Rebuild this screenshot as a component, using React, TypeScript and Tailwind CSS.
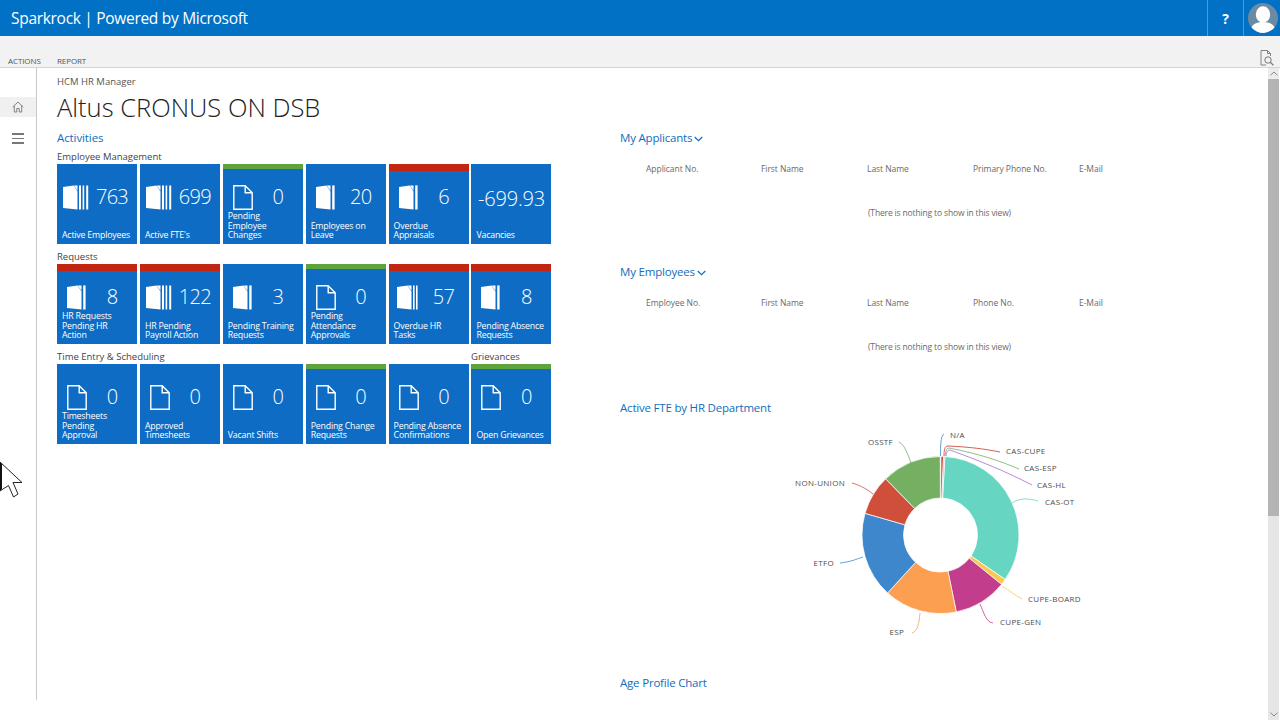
import React from "react";

type Kind = "many" | "two" | "some" | "one" | "none";
type Tile = { n: string; label: string[]; icon: Kind; bar?: "red" | "green" };

function DocIcon({ kind }: { kind: Kind }) {
  if (kind === "one") {
    return (
      <svg width="20" height="25" viewBox="0 0 20 25" className="block ml-[10px]">
        <path d="M.8 .8H12.2L19.2 7.8V24.2H.8Z M12.2 .8V7.8H19.2" fill="none" stroke="#fff" strokeWidth="1.4" />
      </svg>
    );
  }
  const page = "M0 2L10.5 .4L14.5 6.5V24.5L0 23Z M10.8 .4H14.5V5.8Z";
  if (kind === "some") {
    return (
      <svg width="19" height="25" viewBox="0 0 19 25" className="block ml-[10px]">
        <path d={page} fill="#fff" />
        <path d="M16.2 .4H18.6V24.5H16.2Z" fill="#fff" />
      </svg>
    );
  }
  if (kind === "two") {
    return (
      <svg width="21" height="25" viewBox="0 0 21 25" className="block ml-[8px]">
        <path d={page} fill="#fff" />
        <path d="M16 .4H17.6V24.5H16Z M19 .4H20.6V24.5H19Z" fill="#fff" />
      </svg>
    );
  }
  return (
    <svg width="26" height="25" viewBox="0 0 26 25" className="block ml-[6px]">
      <path d={page} fill="#fff" />
      <path d="M16 .4H18V24.5H16Z M19.6 .4H21.2V24.5H19.6Z M23.2 .4H25.2V24.5H23.2Z" fill="#fff" />
    </svg>
  );
}

function TileCard({ t }: { t: Tile }) {
  return (
    <div className="relative h-[80px] w-[80px] bg-[#0f6cc4] text-white overflow-hidden">
      {t.bar === "red" && <div className="h-[7px] bg-[#c22613]" />}
      {t.bar === "green" && <div className="h-[4.5px] bg-[#5ea33c]" />}
      <div className="absolute left-0 right-0 top-[20px] h-[26px]">
        {t.icon === "none" ? (
          <div className="w-full text-center text-[20px] tracking-[-0.2px] leading-[26px] font-light pt-[2px]">{t.n}</div>
        ) : (
          <div className="grid grid-cols-[32px_46px] items-center h-full">
            <DocIcon kind={t.icon} />
            <div className="text-center text-[20px] tracking-[-0.7px] leading-[26px] font-light">{t.n}</div>
          </div>
        )}
      </div>
      <div className="absolute left-[5px] right-0 bottom-[3px] text-[8.8px] leading-[9.6px] tracking-[-0.2px] whitespace-nowrap">
        {t.label.map((l) => (
          <div key={l}>{l}</div>
        ))}
      </div>
    </div>
  );
}

const r1: Tile[] = [
  { n: "763", label: ["Active Employees"], icon: "many" },
  { n: "699", label: ["Active FTE's"], icon: "many" },
  { n: "0", label: ["Pending", "Employee", "Changes"], icon: "one", bar: "green" },
  { n: "20", label: ["Employees on", "Leave"], icon: "some" },
  { n: "6", label: ["Overdue", "Appraisals"], icon: "some", bar: "red" },
  { n: "-699.93", label: ["Vacancies"], icon: "none" },
];
const r2: Tile[] = [
  { n: "8", label: ["HR Requests", "Pending HR", "Action"], icon: "some", bar: "red" },
  { n: "122", label: ["HR Pending", "Payroll Action"], icon: "many", bar: "red" },
  { n: "3", label: ["Pending Training", "Requests"], icon: "some" },
  { n: "0", label: ["Pending", "Attendance", "Approvals"], icon: "one", bar: "green" },
  { n: "57", label: ["Overdue HR", "Tasks"], icon: "two", bar: "red" },
  { n: "8", label: ["Pending Absence", "Requests"], icon: "some", bar: "red" },
];
const r3: Tile[] = [
  { n: "0", label: ["Timesheets", "Pending", "Approval"], icon: "one" },
  { n: "0", label: ["Approved", "Timesheets"], icon: "one" },
  { n: "0", label: ["Vacant Shifts"], icon: "one" },
  { n: "0", label: ["Pending Change", "Requests"], icon: "one", bar: "green" },
  { n: "0", label: ["Pending Absence", "Confirmations"], icon: "one" },
  { n: "0", label: ["Open Grievances"], icon: "one", bar: "green" },
];

function Row({ tiles }: { tiles: Tile[] }) {
  return (
    <div className="grid grid-cols-[80px_80px_80px_80px_80px_80px] gap-x-[2.9px] w-[495px]">
      {tiles.map((t, i) => (
        <TileCard key={i} t={t} />
      ))}
    </div>
  );
}

function Chevron() {
  return (
    <svg width="9" height="6" viewBox="0 0 9 6" className="inline-block ml-[2px] mt-[2px]">
      <path d="M0.7 1L4.5 4.6L8.3 1" fill="none" stroke="#106ebe" strokeWidth="1.2" />
    </svg>
  );
}

function ListPart({ title, cols }: { title: string; cols: string[] }) {
  const xs = ["w-[141px] pl-[26px]", "w-[106px]", "w-[106px]", "w-[106px]", "w-[60px]"];
  return (
    <div className="h-[134px]">
      <div className="h-[20px] text-[11.5px] tracking-[-0.2px] leading-[20px] text-[#106ebe] flex items-center">
        {title}
        <Chevron />
      </div>
      <div className="flex mt-[14px] h-[14px] text-[8.5px] tracking-[-0.05px] leading-[14px] text-[#6a6a6a]">
        {cols.map((c, i) => (
          <div key={c} className={xs[i]}>
            {c}
          </div>
        ))}
      </div>
      <div className="mt-[30px] pl-[248px] text-[8.5px] tracking-[-0.15px] leading-[14px] text-[#6a6a6a]">(There is nothing to show in this view)</div>
    </div>
  );
}

const cx = 160.5;
const cy = 114;
const R = 78.5;
const r = 37;
function pt(rad: number, deg: number) {
  const a = (deg * Math.PI) / 180;
  return `${(cx + rad * Math.sin(a)).toFixed(2)} ${(cy - rad * Math.cos(a)).toFixed(2)}`;
}
function seg(a: number, b: number) {
  const large = b - a > 180 ? 1 : 0;
  return `M${pt(R, a)}A${R} ${R} 0 ${large} 1 ${pt(R, b)}L${pt(r, b)}A${r} ${r} 0 ${large} 0 ${pt(r, a)}Z`;
}

const segs: [number, number, string][] = [
  [3.2, 124.5, "#66d6c2"],
  [124.5, 129, "#fbc74e"],
  [129, 168.4, "#c23d8b"],
  [168.4, 222.4, "#fd9f50"],
  [222.4, 286, "#3f87cc"],
  [286, 315.7, "#cf4f3a"],
  [315.7, 359.8, "#75af61"],
  [0.4, 2.2, "#c9372c"],
  [2.2, 3.2, "#b9b9b9"],
];

const leaders: [string, string][] = [
  ["M160.5 35C160.5 25 160.5 15 164 13", "#3f87cc"],
  ["M164 35C164 28 165 25 168 25C190 26 205 28 220 31", "#c9372c"],
  ["M165 35C166 30 166 27 169 27C200 33 220 40 239 48", "#75af61"],
  ["M166 35C167 31 167 29 170 29C200 40 225 50 252 64", "#a56cd6"],
  ["M232 82C240 77 248 77 258 80", "#66d6c2"],
  ["M222 165C230 170 236 175 242 178", "#fbc74e"],
  ["M200 183C204 192 206 201 213 202", "#c23d8b"],
  ["M140 192C139 202 138 210 132 212", "#fd9f50"],
  ["M83 136C77 138 70 141 60 142", "#3f87cc"],
  ["M93 73C88 69 82 65 72 62", "#cf4f3a"],
  ["M131 42C128 34 125 24 119 21", "#75af61"],
];

const labels: [string, number, number, "start" | "end"][] = [
  ["N/A", 170, 17, "start"],
  ["CAS-CUPE", 226, 33, "start"],
  ["CAS-ESP", 244, 50, "start"],
  ["CAS-HL", 257, 67, "start"],
  ["CAS-OT", 265, 84, "start"],
  ["CUPE-BOARD", 248, 181, "start"],
  ["CUPE-GEN", 220, 204, "start"],
  ["ESP", 124, 214, "end"],
  ["ETFO", 54, 145, "end"],
  ["NON-UNION", 65, 65, "end"],
  ["OSSTF", 113, 24, "end"],
];

function Donut() {
  return (
    <svg width="320" height="230" viewBox="0 0 320 230" className="block">
      {segs.map(([a, b, c]) => (
        <path key={c} d={seg(a, b)} fill={c} stroke="#fff" strokeWidth="0.7" />
      ))}
      {leaders.map(([d, c], i) => (
        <path key={i} d={d} fill="none" stroke={c} strokeWidth="0.8" />
      ))}
      {labels.map(([t, x, y, anchor]) => (
        <text key={t} x={x} y={y} textAnchor={anchor} fontSize="8" letterSpacing="0.3" fill="#4d4d4d" fontFamily="'Open Sans', sans-serif">
          {t}
        </text>
      ))}
    </svg>
  );
}

export default function App() {
  return (
    <div className="relative w-[1280px] h-[720px] overflow-hidden bg-white flex flex-col font-['Open_Sans',sans-serif]">
      <header className="h-[36px] shrink-0 bg-[#0071c5] flex items-center text-white">
        <div className="pl-[11px] text-[15.5px] tracking-[-0.3px] flex-1 leading-[36px]">Sparkrock | Powered by Microsoft</div>
        <div className="w-[36px] h-[36px] border-l border-[#4d9bd6] flex items-center justify-center text-[14px] font-bold">?</div>
        <div className="w-[37px] h-[36px] border-l border-[#4d9bd6] flex items-center justify-start pl-[4px]">
          <svg width="30" height="30" viewBox="0 0 30 30">
            <circle cx="15" cy="15" r="15" fill="#6d8aa3" />
            <ellipse cx="15" cy="11.5" rx="7.2" ry="8.2" fill="#fff" />
            <path d="M3.5 24.5C5 20.5 10 19 15 19S25 20.5 26.5 24.5C23.5 28 19 30 15 30S6.5 28 3.5 24.5Z" fill="#fff" />
          </svg>
        </div>
      </header>

      <div className="h-[32px] shrink-0 bg-[#f2f2f2] border-b border-[#d4d4d4] flex items-end relative text-[8px] tracking-[-0.1px] text-[#555]">
        <div className="ml-[8px] w-[49px] leading-[12px]">ACTIONS</div>
        <div className="leading-[12px]">REPORT</div>
        <svg width="14" height="16" viewBox="0 0 14 16" className="absolute right-[6px] top-[14px]">
          <path d="M1 .5H7.5L10.5 3.5V6M7.5 .5V3.5H10.5M1 .5V15H6" fill="none" stroke="#777" strokeWidth="0.9" />
          <circle cx="8" cy="10" r="3.2" fill="none" stroke="#777" strokeWidth="1" />
          <path d="M10.3 12.3L13.4 15.3" stroke="#777" strokeWidth="1.2" />
        </svg>
      </div>

      <div className="flex flex-1 min-h-0">
        <aside className="w-[37px] h-[632px] shrink-0 border-r border-[#c8c8c8] flex flex-col">
          <div className="mt-[29px] h-[20px] bg-[#f0f0f0] flex items-center justify-center">
            <svg width="12" height="12" viewBox="0 0 12 12">
              <path d="M.7 6L6 1L11.3 6M2.3 4.8V11H4.8V7.5H7.2V11H9.7V4.8" fill="none" stroke="#777" strokeWidth="0.9" />
            </svg>
          </div>
          <div className="mt-[16px] flex flex-col items-center gap-[3px]">
            <div className="w-[12px] h-[1.6px] bg-[#777]" />
            <div className="w-[12px] h-[1.6px] bg-[#777]" />
            <div className="w-[12px] h-[1.6px] bg-[#777]" />
          </div>
        </aside>

        <main className="flex-1 min-w-0 pl-[20px] flex">
          <section className="w-[563px] shrink-0">
            <div className="pt-[7px] h-[20px] text-[9.5px] leading-[13px] text-[#555]">HCM HR Manager</div>
            <h1 className="h-[36px] text-[25.5px] leading-[38px] font-light text-[#222] whitespace-nowrap">Altus CRONUS ON DSB</h1>
            <div className="h-[20px] mt-[4px] text-[11.5px] tracking-[-0.1px] leading-[20px] text-[#106ebe]">Activities</div>
            <div className="h-[14px] mt-[2px] text-[9.5px] leading-[14px] text-[#444]">Employee Management</div>
            <Row tiles={r1} />
            <div className="h-[20px] pt-[5px] text-[9.5px] leading-[15px] text-[#444]">Requests</div>
            <Row tiles={r2} />
            <div className="h-[20px] pt-[5px] text-[9.5px] leading-[15px] text-[#444] flex">
              <span className="w-[414px]">Time Entry &amp; Scheduling</span>
              <span>Grievances</span>
            </div>
            <Row tiles={r3} />
          </section>

          <section className="flex-1 pt-[60px]">
            <ListPart title="My Applicants" cols={["Applicant No.", "First Name", "Last Name", "Primary Phone No.", "E-Mail"]} />
            <ListPart title="My Employees" cols={["Employee No.", "First Name", "Last Name", "Phone No.", "E-Mail"]} />
            <div className="h-[20px] mt-[2px] text-[11.5px] tracking-[-0.2px] leading-[20px] text-[#106ebe]">Active FTE by HR Department</div>
            <div className="ml-[160px] mt-[3px] h-[252px]">
              <Donut />
            </div>
            <div className="h-[20px] text-[11.5px] tracking-[-0.2px] leading-[20px] text-[#106ebe]">Age Profile Chart</div>
          </section>
        </main>

        <div className="w-[11px] mr-[1px] shrink-0 bg-[#e6e6e6] flex flex-col">
          <div className="h-[11px] bg-[#ececec] flex items-center justify-center">
            <svg width="8" height="5" viewBox="0 0 8 5"><path d="M.5 4.3L4 1L7.5 4.3" fill="none" stroke="#888" strokeWidth="1" /></svg>
          </div>
          <div className="h-[437px] bg-[#b4b4b4]" />
          <div className="flex-1" />
          <div className="h-[11px] flex items-center justify-center">
            <svg width="8" height="5" viewBox="0 0 8 5"><path d="M.5 .7L4 4L7.5 .7" fill="none" stroke="#888" strokeWidth="1" /></svg>
          </div>
        </div>
      </div>

      <svg width="24" height="38" viewBox="0 0 24 38" className="absolute left-0 top-[461px]">
        <path d="M0 1L22 21.5H13L18 33L13.5 36L8.5 24.5L0 30Z" fill="#fff" stroke="#222" strokeWidth="1" />
        <path d="M0 1L2 3V28L0 30Z" fill="#111" />
      </svg>
    </div>
  );
}
